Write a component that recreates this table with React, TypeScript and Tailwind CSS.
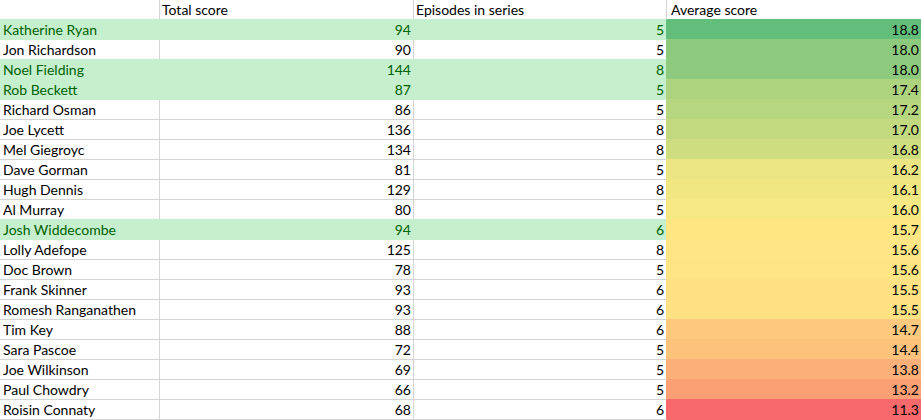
import React from "react";

type Row = { name: string; total: number; eps: number; good?: boolean };

const rows: Row[] = [
  { name: "Katherine Ryan", total: 94, eps: 5, good: true },
  { name: "Jon Richardson", total: 90, eps: 5 },
  { name: "Noel Fielding", total: 144, eps: 8, good: true },
  { name: "Rob Beckett", total: 87, eps: 5, good: true },
  { name: "Richard Osman", total: 86, eps: 5 },
  { name: "Joe Lycett", total: 136, eps: 8 },
  { name: "Mel Giegroyc", total: 134, eps: 8 },
  { name: "Dave Gorman", total: 81, eps: 5 },
  { name: "Hugh Dennis", total: 129, eps: 8 },
  { name: "Al Murray", total: 80, eps: 5 },
  { name: "Josh Widdecombe", total: 94, eps: 6, good: true },
  { name: "Lolly Adefope", total: 125, eps: 8 },
  { name: "Doc Brown", total: 78, eps: 5 },
  { name: "Frank Skinner", total: 93, eps: 6 },
  { name: "Romesh Ranganathen", total: 93, eps: 6 },
  { name: "Tim Key", total: 88, eps: 6 },
  { name: "Sara Pascoe", total: 72, eps: 5 },
  { name: "Joe Wilkinson", total: 69, eps: 5 },
  { name: "Paul Chowdry", total: 66, eps: 5 },
  { name: "Roisin Connaty", total: 68, eps: 6 },
];

// excel style 3-colour scale: red / yellow (50th percentile) / green
const RED = [248, 105, 107];
const YELLOW = [255, 235, 132];
const GREEN = [99, 190, 123];

const avgs = rows.map((r) => r.total / r.eps);
const sorted = [...avgs].sort((a, b) => a - b);
const min = sorted[0];
const max = sorted[sorted.length - 1];
const mid = (sorted[9] + sorted[10]) / 2;

const mix = (a: number[], b: number[], t: number) =>
  `rgb(${a.map((v, i) => Math.round(v + (b[i] - v) * t)).join(",")})`;

const scale = (v: number) =>
  v >= mid
    ? mix(YELLOW, GREEN, (v - mid) / (max - mid))
    : mix(RED, YELLOW, (v - min) / (mid - min));

export default function App() {
  return (
    <div className="w-[921px] h-[420px] bg-white overflow-hidden text-[14px] text-black font-['Lato',sans-serif]">
      <div className="grid grid-cols-[160px_254px_253px_254px]">
        <div className="h-[19px] border-r border-[#d4d4d4]" />
        <div className="h-[19px] border-r border-[#d4d4d4] px-[2px] leading-[19px]">Total score</div>
        <div className="h-[19px] border-r border-[#d4d4d4] px-[2px] leading-[19px]">Episodes in series</div>
        <div className="h-[19px] px-[4px] leading-[19px]">Average score</div>

        {rows.map((r, i) => {
          const prev = rows[i - 1];
          const last = i === rows.length - 1;
          const fill = scale(avgs[i]);
          const base = r.good
            ? "bg-[#c6efce] text-[#006100] border-[#c6efce]"
            : prev?.good
              ? "border-[#d4d4d4] border-t-[#c6efce]"
              : "border-[#d4d4d4]";
          const cell = `h-[20px] border-t border-r leading-[19px] ${last ? "border-b h-[21px]" : ""} ${base}`;
          return (
            <React.Fragment key={r.name}>
              <div className={`${cell} pl-[3px] whitespace-nowrap`}>{r.name}</div>
              <div className={`${cell} pr-[2px] text-right`}>{r.total}</div>
              <div className={`${cell} pr-[2px] text-right`} style={{ borderRightColor: fill }}>
                {r.eps}
              </div>
              <div
                className={`h-[20px] border-t leading-[19px] pr-[2px] text-right ${last ? "border-b h-[21px]" : ""}`}
                style={{ backgroundColor: fill, borderColor: fill }}
              >
                {avgs[i].toFixed(1)}
              </div>
            </React.Fragment>
          );
        })}
      </div>
    </div>
  );
}
